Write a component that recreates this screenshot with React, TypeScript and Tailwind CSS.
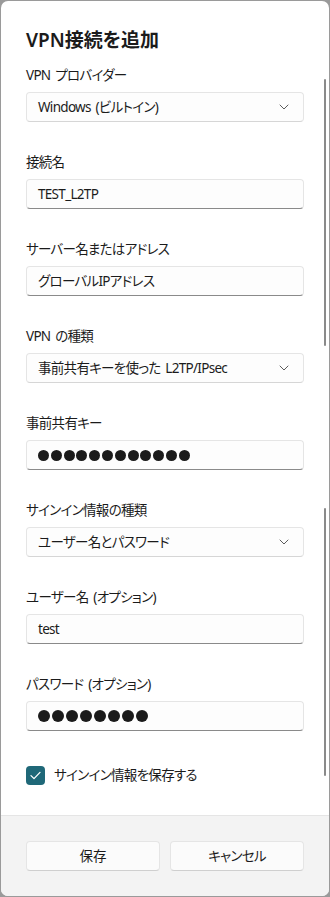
import React from "react";

const font = {
	fontFamily: '"Noto Sans", "Noto Sans CJK JP", sans-serif',
};

function Chevron() {
	return (
		<svg width="10" height="6" viewBox="0 0 10 6" fill="none" className="mr-[4px]">
			<path d="M1 1l4 4 4-4" stroke="#5c5c5c" strokeWidth="1" strokeLinecap="round" strokeLinejoin="round" />
		</svg>
	);
}

function Dots({ count, big }: { count: number; big?: boolean }) {
	return (
		<div className={big ? "flex items-center gap-[2px]" : "flex items-center gap-[1.8px]"}>
			{Array.from({ length: count }).map((_, i) => (
				<span key={i} className={big ? "block w-[12px] h-[12px] rounded-full bg-[#1b1b1b]" : "block w-[11px] h-[11px] rounded-full bg-[#1b1b1b]"} />
			))}
		</div>
	);
}

function Field({ label, kind, value, dots, big, first }: { label: string; kind: "select" | "input"; value?: string; dots?: number; big?: boolean; first?: boolean }) {
	return (
		<div className={first ? "mt-[11px]" : "mt-[30px]"}>
			<div className="h-5 text-[13.5px] leading-5 tracking-[-0.7px] [word-spacing:2px] text-[#1b1b1b]">{label}</div>
			{kind === "select" ? (
				<div className="mt-[7px] h-[30px] rounded-[4px] border border-[#e5e5e5] border-b-[#d6d6d6] bg-[#fdfdfd] pl-[11px] pr-[10px] flex items-center justify-between">
					<span className="text-[13.5px] tracking-[-0.7px] [word-spacing:2px] text-[#1b1b1b]">{value}</span>
					<Chevron />
				</div>
			) : (
				<div className="mt-[7px] h-[30px] rounded-[4px] border border-[#e5e5e5] border-b-[#8a8a8a] bg-[#fdfdfd] pl-[11px] pr-[10px] flex items-center">
					{dots ? <Dots count={dots} big={big} /> : <span className="text-[13.5px] tracking-[-0.7px] text-[#1b1b1b]">{value}</span>}
				</div>
			)}
		</div>
	);
}

export default function App() {
	return (
		<div className="w-[330px] h-[897px] bg-[#9a9a9a] p-px [font-feature-settings:'palt']" style={font}>
			<div className="relative h-[895px] rounded-[7px] bg-white overflow-hidden flex flex-col">
				<div className="flex-1 px-[25px] pt-[25px]">
					<div className="h-7 text-[19px] leading-7 font-semibold text-[#1b1b1b]">VPN接続を追加</div>
					<Field first label="VPN プロバイダー" kind="select" value="Windows (ビルトイン)" />
					<Field label="接続名" kind="input" value="TEST_L2TP" />
					<Field label="サーバー名またはアドレス" kind="input" value="グローバルIPアドレス" />
					<Field label="VPN の種類" kind="select" value="事前共有キーを使った L2TP/IPsec" />
					<Field label="事前共有キー" kind="input" dots={12} />
					<Field label="サインイン情報の種類" kind="select" value="ユーザー名とパスワード" />
					<Field label="ユーザー名 (オプション)" kind="input" value="test" />
					<Field label="パスワード (オプション)" kind="input" dots={8} big />
					<div className="mt-[34px] h-5 flex items-center gap-[9px]">
						<div className="w-[19px] h-[19px] rounded-[4px] bg-[#1f6878] flex items-center justify-center">
							<svg width="11" height="9" viewBox="0 0 11 9" fill="none">
								<path d="M1 4.6l3 3L10 1.4" stroke="white" strokeWidth="1.3" strokeLinecap="round" strokeLinejoin="round" />
							</svg>
						</div>
						<span className="text-[13.5px] tracking-[-0.7px] text-[#1b1b1b]">サインイン情報を保存する</span>
					</div>
				</div>
				<div className="h-[81px] border-t border-[#e5e5e5] bg-[#f3f3f3] px-[25px] pt-[25px]">
					<div className="grid grid-cols-2 gap-[10px]">
						<button className="h-[30px] rounded-[4px] border border-[#e5e5e5] border-b-[#cfcfcf] bg-[#fbfbfb] text-[13.5px] text-[#1b1b1b]">保存</button>
						<button className="h-[30px] rounded-[4px] border border-[#e5e5e5] border-b-[#cfcfcf] bg-[#fbfbfb] text-[13.5px] tracking-[-0.7px] text-[#1b1b1b]">キャンセル</button>
					</div>
				</div>
				<div className="absolute left-[323px] top-[78px] w-[2px] h-[267px] rounded-full bg-[#8a8a8a]" />
				<div className="absolute left-[323px] top-[507px] w-[2px] h-[268px] rounded-full bg-[#8a8a8a]" />
			</div>
		</div>
	);
}
